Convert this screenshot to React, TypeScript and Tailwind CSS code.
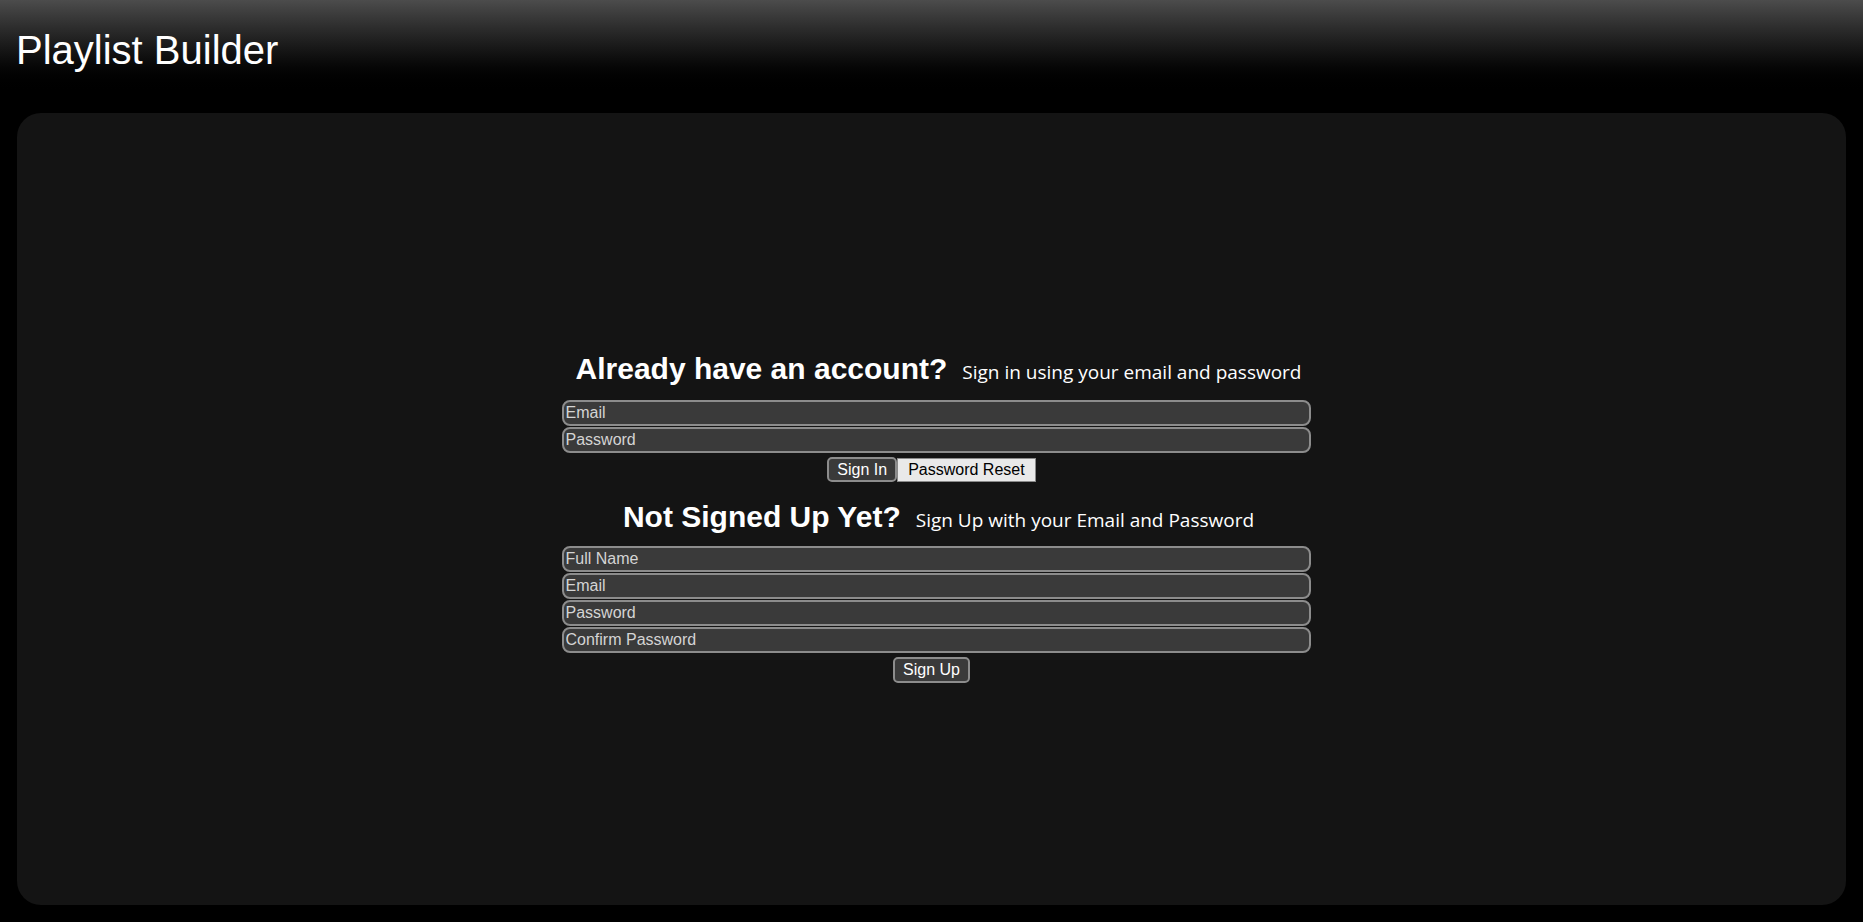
const inputClass =
  "block w-[749px] h-[26px] mb-[1px] bg-[#3a3a3a] border-2 border-[#8c8c8c] rounded-[8px] px-[2px] text-[16px] text-[#e0e0e0] placeholder:text-[#d4d4d4] outline-none font-['Liberation_Sans',Arial,sans-serif]";

const darkButton =
  "px-[8px] bg-[#3a3a3a] border-2 border-[#8c8c8c] rounded-[5px] text-[16px] leading-none text-white font-['Liberation_Sans',Arial,sans-serif]";

type HeadingProps = {
  title: string;
  hint: string;
};

const Heading = ({ title, hint }: HeadingProps) => (
  <div className="flex items-baseline justify-center h-[40px] pl-[14px]">
    <h2 className="text-[30px] leading-[40px] font-bold text-white font-['Liberation_Sans',Arial,sans-serif]">
      {title}
    </h2>
    <span className="ml-[15px] text-[19px] text-white font-['Open_Sans',sans-serif]">
      {hint}
    </span>
  </div>
);

const App = () => {
  return (
    <div className="h-[922px] bg-black overflow-hidden">
      <header className="h-[96px] bg-linear-to-b from-[#4c4c4c] to-black pl-[16px] pt-[30px]">
        <h1 className="text-[40px] leading-[40px] text-white font-['Liberation_Sans',Arial,sans-serif]">
          Playlist Builder
        </h1>
      </header>

      <main className="mx-[17px] mt-[17px] h-[792px] rounded-[24px] bg-[#141414] flex flex-col items-center pt-[236px]">
        <div className="w-[740px]">
          <Heading title="Already have an account?" hint="Sign in using your email and password" />
          <form className="mt-[11px]" onSubmit={(e) => e.preventDefault()}>
            <input type="email" placeholder="Email" className={inputClass} />
            <input type="password" placeholder="Password" className={inputClass} />
            <div className="flex justify-center mt-[4px]">
              <button type="submit" className={`${darkButton} h-[25px]`}>
                Sign In
              </button>
              <button
                type="button"
                className="h-[24px] mt-[1px] px-[10px] bg-[#e9e9e9] border border-[#8a8a8a] text-[16px] leading-none text-black font-['Liberation_Sans',Arial,sans-serif]"
              >
                Password Reset
              </button>
            </div>
          </form>

          <div className="mt-[15px]">
            <Heading title="Not Signed Up Yet?" hint="Sign Up with your Email and Password" />
          </div>
          <form className="mt-[9px]" onSubmit={(e) => e.preventDefault()}>
            <input type="text" placeholder="Full Name" className={inputClass} />
            <input type="email" placeholder="Email" className={inputClass} />
            <input type="password" placeholder="Password" className={inputClass} />
            <input type="password" placeholder="Confirm Password" className={inputClass} />
            <div className="flex justify-center mt-[4px]">
              <button type="submit" className={`${darkButton} h-[26px]`}>
                Sign Up
              </button>
            </div>
          </form>
        </div>
      </main>
    </div>
  );
};

export default App;
